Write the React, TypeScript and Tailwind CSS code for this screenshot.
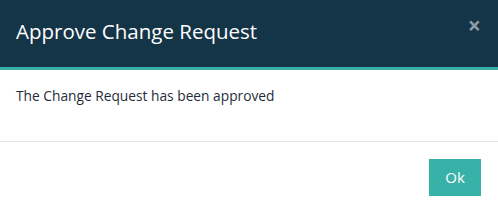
export default function App() {
  return (
    <div className="w-[498px] h-[212px] bg-white overflow-hidden" style={{ fontFamily: '"Open Sans", "Noto Sans", sans-serif' }}>
      {/* Header */}
      <div className="h-[70px] bg-[#143447] border-b-[3px] border-[#38b1a9] flex items-center justify-between pl-4 pr-[17px]">
        <h4 className="text-[20.5px] text-white leading-none mb-[4px]">Approve Change Request</h4>
        <button className="text-[23px] font-bold leading-none text-[#8c9ba6] -mt-[16px]">×</button>
      </div>

      {/* Body */}
      <div className="px-4 pt-[17px] pb-[37px] border-b border-[#e5e5e5]">
        <p className="text-[13.75px] text-[#1f2d3a] leading-[17px]">The Change Request has been approved</p>
      </div>

      {/* Footer */}
      <div className="flex justify-end pt-[17px] pr-[17px]">
        <button className="w-[52px] h-[37px] bg-[#38b1a9] text-white text-[15px]">Ok</button>
      </div>
    </div>
  );
}
